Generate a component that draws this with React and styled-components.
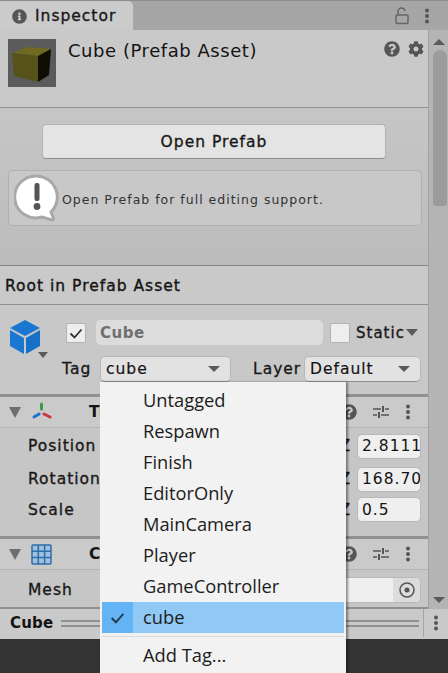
import React from "react";
import styled, { createGlobalStyle } from "styled-components";
import { FaInfoCircle, FaQuestionCircle, FaCog } from "react-icons/fa";

const GlobalStyle = createGlobalStyle`
  html, body { margin: 0; padding: 0; background: #333; }
  * { box-sizing: border-box; }
`;

const Window = styled.div`
  width: 448px;
  height: 673px;
  position: relative;
  overflow: hidden;
  display: flex;
  flex-direction: column;
  font-family: "DejaVu Sans", sans-serif;
  font-size: 15.5px;
  letter-spacing: 1px;
  color: #141414;
  background: #c6c6c6;
`;

const TabBar = styled.div`
  height: 30px;
  flex: none;
  display: flex;
  align-items: flex-end;
  background: #a6a6a6;
  border-top: 1px solid #8d8d8d;
`;

const Tab = styled.div`
  width: 133px;
  height: 29px;
  display: flex;
  align-items: center;
  gap: 8px;
  padding: 1px 0 0 12px;
  background: #cbcbcb;
  border-radius: 0 5px 0 0;
  -webkit-text-stroke: 0.35px #222;
`;

const TabTools = styled.div`
  margin-left: auto;
  height: 29px;
  display: flex;
  align-items: center;
  gap: 15px;
  padding-right: 18px;
  color: #555;
`;

const Middle = styled.div`
  flex: 1;
  display: flex;
  min-height: 0;
`;

const Content = styled.div`
  flex: 1;
  min-width: 0;
  display: flex;
  flex-direction: column;
`;

const ScrollTrack = styled.div`
  width: 20px;
  flex: none;
  display: flex;
  flex-direction: column;
  align-items: center;
  background: #b4b4b4;
  border-left: 1px solid #a4a4a4;
  padding: 9px 0 6px 1px;
`;

const ScrollThumb = styled.div`
  width: 14px;
  height: 156px;
  margin: 5px 0 auto 2px;
  background: #9b9b9b;
  border-radius: 7px 7px 3px 3px;
`;

const Arrow = styled.div`
  width: 0;
  height: 0;
  flex: none;
  border-left: ${(p) => p.$size || 6}px solid transparent;
  border-right: ${(p) => p.$size || 6}px solid transparent;
  ${(p) => (p.$up ? "border-bottom" : "border-top")}: ${(p) => p.$height || 6}px solid ${(p) => p.$color || "#5a5a5a"};
`;

const AssetHeader = styled.div`
  height: 78px;
  flex: none;
  display: flex;
  align-items: flex-start;
  padding: 9px 4px 0 8px;
  background: #c9c9c9;
  border-bottom: 1px solid #8f8f8f;
`;

const Title = styled.div`
  margin-left: 12px;
  font-size: 18px;
  letter-spacing: 0.55px;
  line-height: 24px;
`;

const HeaderTools = styled.div`
  margin-left: auto;
  display: flex;
  gap: 8px;
  padding-top: 2px;
  color: #555;
`;

const PrefabPanel = styled.div`
  height: 158px;
  flex: none;
  padding: 16px 8px 0;
  background: linear-gradient(#c6c6c6, #bcbcbc);
  border-bottom: 1px solid #848484;
`;

const WideButton = styled.div`
  width: 344px;
  height: 35px;
  margin: 0 auto 11px 34px;
  display: flex;
  align-items: center;
  justify-content: center;
  background: #e4e4e4;
  border: 1px solid #b2b2b2;
  border-bottom: 1px solid #8e8e8e;
  border-radius: 4px;
  -webkit-text-stroke: 0.35px #222;
`;

const HelpBox = styled.div`
  width: 414px;
  height: 56px;
  display: flex;
  align-items: center;
  gap: 2px;
  padding-left: 5px;
  background: #c8c8c8;
  border: 1px solid #b0b0b0;
  border-radius: 5px;
  font-size: 12.5px;
  color: #333;
`;

const HelpText = styled.span`
  padding-top: 2px;
`;

const SectionBar = styled.div`
  height: 39px;
  flex: none;
  display: flex;
  align-items: center;
  padding: 2px 0 0 5px;
  background: #c9c9c9;
  border-bottom: 1px solid #8f8f8f;
  -webkit-text-stroke: 0.35px #111;
`;

const ObjectHeader = styled.div`
  height: 92px;
  flex: none;
  display: flex;
  padding: 15px 7px 0 10px;
  background: #c8c8c8;
  border-bottom: 3px solid #909090;
`;

const ObjectIcon = styled.div`
  width: 52px;
  flex: none;
  display: flex;
  flex-direction: column;
`;

const CubeMenuArrow = styled.div`
  margin: -2px 0 0 28px;
`;

const ObjectFields = styled.div`
  flex: 1;
  display: flex;
  flex-direction: column;
  gap: 11px;
`;

const NameRow = styled.div`
  height: 25px;
  display: flex;
  align-items: center;
`;

const TagRow = styled.div`
  height: 26px;
  display: flex;
  align-items: center;
`;

const CheckBox = styled.div`
  width: 20px;
  height: 20px;
  flex: none;
  margin-left: ${(p) => p.$left || 0}px;
  display: flex;
  align-items: center;
  justify-content: center;
  background: #eeeeee;
  border: 1px solid #b4b4b4;
  border-radius: 2px;
`;

const NameField = styled.div`
  width: 227px;
  height: 25px;
  margin-left: 10px;
  padding-left: 4px;
  display: flex;
  align-items: center;
  background: #dcdcdc;
  border-radius: 5px;
  font-size: 15px;
  font-weight: bold;
  letter-spacing: 0.5px;
  color: #6f6f6f;
`;

const StaticLabel = styled.span`
  width: 49px;
  margin: 0 1px 0 6px;
  font-size: 15px;
  white-space: nowrap;
  -webkit-text-stroke: 0.35px #222;
`;

const FieldLabel = styled.span`
  width: ${(p) => p.$width}px;
  margin-left: ${(p) => p.$left || 0}px;
  -webkit-text-stroke: 0.35px #222;
`;

const Dropdown = styled.div`
  width: ${(p) => p.$width}px;
  height: 26px;
  margin-left: ${(p) => p.$left}px;
  padding: 0 10px 0 5px;
  display: flex;
  align-items: center;
  justify-content: space-between;
  background: #e2e2e2;
  border: 1px solid #b8b8b8;
  border-bottom-color: #8f8f8f;
  border-radius: 5px;
  -webkit-text-stroke: 0.2px #222;
`;

const ComponentHeader = styled.div`
  height: 31px;
  flex: none;
  display: flex;
  align-items: center;
  padding: 0 17px 0 9px;
  background: #cacaca;
  border-bottom: 1px solid #b4b4b4;
`;

const HeaderIcon = styled.div`
  width: 21px;
  height: 21px;
  margin-left: 10px;
  display: flex;
`;

const ComponentName = styled.span`
  margin-left: 37px;
  font-weight: bold;
`;

const ComponentTools = styled.div`
  margin-left: auto;
  display: flex;
  align-items: center;
  gap: 16px;
  color: #555;
`;

const TransformRows = styled.div`
  height: 111px;
  flex: none;
  padding: 2px 7px 0 28px;
  background: #c6c6c6;
  border-bottom: 3px solid #909090;
`;

const PropertyRow = styled.div`
  height: ${(p) => p.$height}px;
  display: flex;
  align-items: center;
  -webkit-text-stroke: 0.35px #222;
`;

const Axis = styled.span`
  margin-left: auto;
  margin-right: 6px;
`;

const ValueField = styled.div`
  width: 64px;
  height: 25px;
  flex: none;
  overflow: hidden;
  padding-left: 4px;
  display: flex;
  align-items: center;
  background: #efefef;
  border: 1px solid #b8b8b8;
  border-radius: 5px;
  white-space: nowrap;
  -webkit-text-stroke: 0;
`;

const MeshRow = styled.div`
  height: 40px;
  flex: none;
  display: flex;
  align-items: center;
  padding: 2px 7px 0 28px;
  background: #c6c6c6;
  border-bottom: 3px solid #909090;
  -webkit-text-stroke: 0.35px #222;
`;

const ObjectField = styled.div`
  margin-left: auto;
  width: 120px;
  height: 26px;
  display: flex;
  justify-content: flex-end;
  background: #efefef;
  border: 1px solid #b8b8b8;
  border-radius: 5px;
  overflow: hidden;
`;

const PickerButton = styled.div`
  width: 27px;
  display: flex;
  align-items: center;
  justify-content: center;
  background: #dcdcdc;
`;

const FootBar = styled.div`
  height: 30px;
  flex: none;
  display: flex;
  align-items: center;
  padding-bottom: 2px;
  background: #c9c9c9;
`;

const FootName = styled.span`
  margin-left: 10px;
  font-size: 15px;
  font-weight: bold;
  letter-spacing: 0.2px;
`;

const DoubleLine = styled.div`
  flex: 1;
  height: 7px;
  margin: 0 4px 0 8px;
  border-top: 2px solid #8f8f8f;
  border-bottom: 2px solid #8f8f8f;
`;

const FootTool = styled.div`
  width: 25px;
  height: 100%;
  display: flex;
  align-items: center;
  justify-content: center;
  color: #555;
  border-left: 1px solid #a6a6a6;
`;

const Taskbar = styled.div`
  height: 34px;
  flex: none;
  background: #333333;
`;

const Popup = styled.div`
  position: absolute;
  left: 100px;
  top: 382px;
  width: 246px;
  height: 291px;
  padding: 3px 2px 0;
  background: #f2f2f2;
  box-shadow: 2px 0 2px rgba(0, 0, 0, 0.4);
  font-family: "Open Sans", sans-serif;
  font-size: 18.3px;
  letter-spacing: 0;
  color: #1c1c1c;
`;

const MenuItem = styled.div`
  height: 31px;
  display: flex;
  align-items: center;
  background: ${(p) => (p.$selected ? "#90c8f6" : "transparent")};
`;

const CheckColumn = styled.div`
  width: 31px;
  height: 100%;
  flex: none;
  display: flex;
  align-items: center;
  justify-content: center;
  background: ${(p) => (p.$selected ? "#64b3f5" : "transparent")};
`;

const MenuLabel = styled.span`
  margin-left: 10px;
  padding-bottom: 2px;
`;

const MenuSeparator = styled.div`
  height: 1px;
  margin: 3px 0 3px 0;
  background: #d8d8d8;
`;

const LockIcon = () => (
  <svg width="14" height="18" viewBox="0 0 14 18" fill="none" stroke="#666" strokeWidth="1.5">
    <path d="M3 8V5a3.5 3.5 0 0 1 7 -1" />
    <rect x="1" y="8" width="12" height="8.5" rx="1" />
  </svg>
);

const Dots = ({ color = "#555" }) => (
  <svg width="6" height="16" viewBox="0 0 6 16" fill={color}>
    <circle cx="3" cy="2.5" r="2" />
    <circle cx="3" cy="8" r="2" />
    <circle cx="3" cy="13.5" r="2" />
  </svg>
);

const Sliders = () => (
  <svg width="16" height="16" viewBox="0 0 16 16" stroke="#555" fill="#555">
    <path d="M0 5h8M12 5h4M0 11h4M8 11h8" strokeWidth="1.4" />
    <rect x="9" y="2" width="2" height="6" stroke="none" />
    <rect x="5" y="8" width="2" height="6" stroke="none" />
  </svg>
);

const Thumbnail = () => (
  <svg width="48" height="48" viewBox="0 0 48 48">
    <rect width="48" height="48" fill="#5b5b5b" />
    <polygon points="4,14 20,8 43,10 30,17" fill="#6e6a20" />
    <polygon points="4,14 30,17 30,43 6,37" fill="#57521a" />
    <polygon points="30,17 43,10 41,36 30,43" fill="#0f0e05" />
  </svg>
);

const BlueCube = () => (
  <svg width="30" height="34" viewBox="0 0 30 34">
    <polygon points="15,0 30,8 15,16 0,8" fill="#1977d2" />
    <polygon points="0,10 14,18 14,34 0,26" fill="#1977d2" />
    <polygon points="30,10 16,18 16,34 30,26" fill="#1870c6" />
  </svg>
);

const WarnBubble = () => (
  <svg width="46" height="48" viewBox="0 0 46 48">
    <path d="M23 2a21 21 0 1 0 5 41l10 3 c2 0 2 -2 1 -3l-2 -5A21 21 0 0 0 23 2z" fill="#fff" stroke="#a8a8a8" strokeWidth="3" />
    <rect x="20.500" y="9" width="5" height="18" rx="2" fill="#555" />
    <circle cx="23" cy="32.500" r="3.400" fill="#555" />
  </svg>
);

const Tick = ({ color = "#333", size = 16 }) => (
  <svg width={size} height={size} viewBox="0 0 16 16" fill="none" stroke={color} strokeWidth="1.800">
    <path d="M2.500 8.500l4 4 7-8" />
  </svg>
);

const TransformIcon = () => (
  <svg width="21" height="21" viewBox="0 0 21 21" strokeWidth="3" strokeLinecap="round">
    <path d="M10.500 2v5" stroke="#3e9a4a" />
    <path d="M8 12l-5 3" stroke="#1b74cf" />
    <path d="M13 12l6 3" stroke="#c7393a" />
  </svg>
);

const MeshIcon = () => (
  <svg width="21" height="21" viewBox="0 0 21 21" fill="#9fc0e0" stroke="#2f6da8" strokeWidth="1.500">
    <rect x="1" y="1" width="19" height="19" rx="1" />
    <path d="M7.300 1v19M13.600 1v19M1 7.300h19M1 13.600h19" fill="none" />
  </svg>
);

const Target = () => (
  <svg width="16" height="16" viewBox="0 0 16 16">
    <circle cx="8" cy="8" r="7" fill="none" stroke="#555" strokeWidth="1.500" />
    <circle cx="8" cy="8" r="2.500" fill="#555" />
  </svg>
);

const tags = ["Untagged", "Respawn", "Finish", "EditorOnly", "MainCamera", "Player", "GameController"];

const Tools = () => (
  <ComponentTools>
    <FaQuestionCircle size={16} />
    <Sliders />
    <Dots />
  </ComponentTools>
);

export default function App() {
  return (
    <Window>
      <GlobalStyle />
      <TabBar>
        <Tab>
          <FaInfoCircle size={15} color="#555" />
          Inspector
        </Tab>
        <TabTools>
          <LockIcon />
          <Dots />
        </TabTools>
      </TabBar>
      <Middle>
        <Content>
          <AssetHeader>
            <Thumbnail />
            <Title>Cube (Prefab Asset)</Title>
            <HeaderTools>
              <FaQuestionCircle size={16} />
              <FaCog size={16} />
            </HeaderTools>
          </AssetHeader>
          <PrefabPanel>
            <WideButton>Open Prefab</WideButton>
            <HelpBox>
              <WarnBubble />
              <HelpText>Open Prefab for full editing support.</HelpText>
            </HelpBox>
          </PrefabPanel>
          <SectionBar>Root in Prefab Asset</SectionBar>
          <ObjectHeader>
            <ObjectIcon>
              <BlueCube />
              <CubeMenuArrow>
                <Arrow $size={5} />
              </CubeMenuArrow>
            </ObjectIcon>
            <ObjectFields>
              <NameRow>
                <CheckBox $left={4}>
                  <Tick />
                </CheckBox>
                <NameField>Cube</NameField>
                <CheckBox $left={7} />
                <StaticLabel>Static</StaticLabel>
                <Arrow $size={6} $height={7} />
              </NameRow>
              <TagRow>
                <FieldLabel $width={30}>Tag</FieldLabel>
                <Dropdown $width={131} $left={8}>
                  cube
                  <Arrow $size={6} $height={6} />
                </Dropdown>
                <FieldLabel $width={46} $left={22}>Layer</FieldLabel>
                <Dropdown $width={117} $left={5}>
                  Default
                  <Arrow $size={6} $height={6} />
                </Dropdown>
              </TagRow>
            </ObjectFields>
          </ObjectHeader>
          <ComponentHeader>
            <Arrow $size={6} $height={11} $color="#6e6e6e" />
            <HeaderIcon>
              <TransformIcon />
            </HeaderIcon>
            <ComponentName>Transform</ComponentName>
            <Tools />
          </ComponentHeader>
          <TransformRows>
            <PropertyRow $height={32}>
              Position
              <Axis>Z</Axis>
              <ValueField>2.8111</ValueField>
            </PropertyRow>
            <PropertyRow $height={34}>
              Rotation
              <Axis>Z</Axis>
              <ValueField>168.70</ValueField>
            </PropertyRow>
            <PropertyRow $height={27}>
              Scale
              <Axis>Z</Axis>
              <ValueField>0.5</ValueField>
            </PropertyRow>
          </TransformRows>
          <ComponentHeader>
            <Arrow $size={6} $height={11} $color="#6e6e6e" />
            <HeaderIcon>
              <MeshIcon />
            </HeaderIcon>
            <ComponentName>Cube</ComponentName>
            <Tools />
          </ComponentHeader>
          <MeshRow>
            Mesh
            <ObjectField>
              <PickerButton>
                <Target />
              </PickerButton>
            </ObjectField>
          </MeshRow>
        </Content>
        <ScrollTrack>
          <Arrow $up $size={6} $height={6} />
          <ScrollThumb />
          <Arrow $size={6} $height={6} />
        </ScrollTrack>
      </Middle>
      <FootBar>
        <FootName>Cube</FootName>
        <DoubleLine />
        <FootTool>
          <Dots />
        </FootTool>
      </FootBar>
      <Taskbar />
      <Popup>
        {tags.map((tag) => (
          <MenuItem key={tag}>
            <CheckColumn />
            <MenuLabel>{tag}</MenuLabel>
          </MenuItem>
        ))}
        <MenuItem $selected>
          <CheckColumn $selected>
            <Tick color="#22384d" size={17} />
          </CheckColumn>
          <MenuLabel>cube</MenuLabel>
        </MenuItem>
        <MenuSeparator />
        <MenuItem>
          <CheckColumn />
          <MenuLabel>Add Tag...</MenuLabel>
        </MenuItem>
      </Popup>
    </Window>
  );
}
